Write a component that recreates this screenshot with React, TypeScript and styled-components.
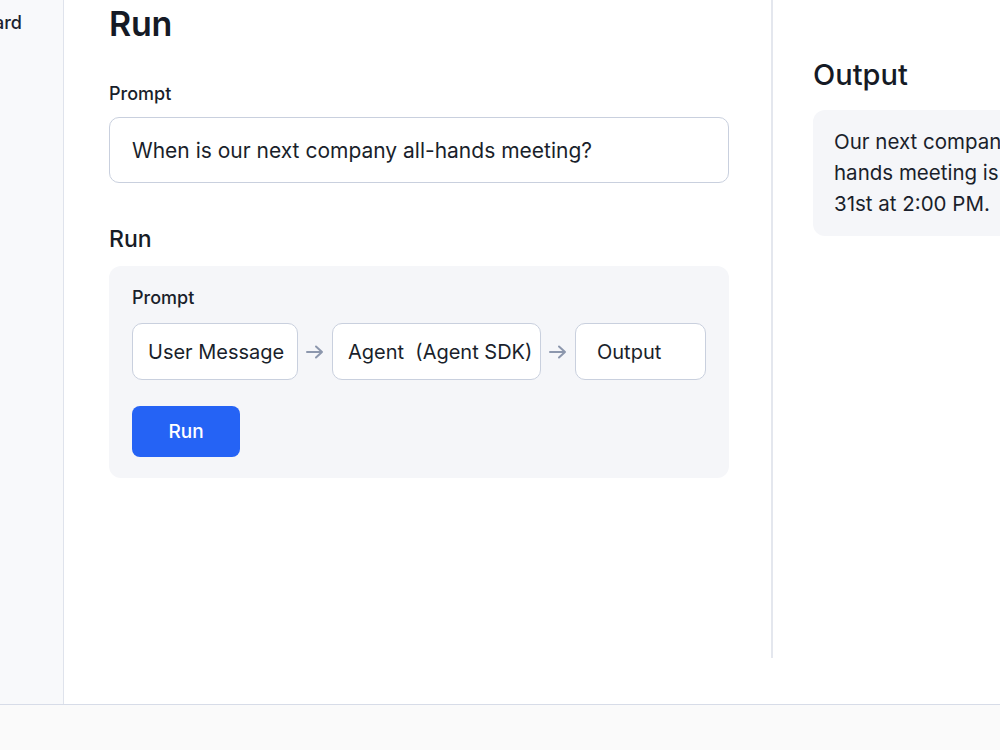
import styled, { createGlobalStyle } from "styled-components";

const GlobalStyle = createGlobalStyle`
  html, body {
    margin: 0;
    padding: 0;
    background: #ffffff;
    overflow: hidden;
  }
  body {
    font-family: Inter, "Noto Sans", "Liberation Sans", sans-serif;
    color: #171c26;
  }
  * {
    box-sizing: border-box;
  }
`;

const Shell = styled.div`
  width: 1000px;
  height: 750px;
  display: flex;
  flex-direction: column;
  overflow: hidden;
`;

const Body = styled.div`
  height: 705px;
  display: flex;
  border-bottom: 1px solid #d7dce8;
`;

const Sidebar = styled.aside`
  flex: 0 0 244px;
  margin-left: -180px;
  background: #f8f9fb;
  border-right: 1px solid #dfe3ec;
  padding: 12px 0 0 108px;
`;

const NavItem = styled.div`
  font-size: 18px;
  font-weight: 500;
  line-height: 22px;
  color: #1c2230;
`;

const Main = styled.main`
  flex: 1;
  display: flex;
  align-items: flex-start;
`;

const LeftColumn = styled.section`
  flex: 0 0 708px;
  height: 658px;
  padding: 0 42px 0 45px;
  border-right: 2px solid #e4e7ee;
`;

const RightColumn = styled.section`
  flex: 1;
  padding: 58px 0 0 40px;
  overflow: hidden;
`;

const PageTitle = styled.h1`
  margin: 0;
  padding-top: 2px;
  font-size: 34px;
  font-weight: 600;
  line-height: 44px;
  letter-spacing: -0.3px;
  color: #151a25;
`;

const Label = styled.div<{ $top?: number }>`
  margin-top: ${(p) => p.$top ?? 0}px;
  font-size: 18px;
  font-weight: 500;
  line-height: 22px;
  color: #1a1f2b;
`;

const PromptInput = styled.div`
  margin-top: 12px;
  height: 66px;
  display: flex;
  align-items: center;
  padding: 0 22px;
  border: 1px solid #c9d0de;
  border-radius: 10px;
  font-size: 21px;
  color: #1a1f2b;
`;

const SectionTitle = styled.h2`
  margin: 42px 0 0;
  font-size: 23px;
  font-weight: 500;
  line-height: 28px;
  color: #171c26;
`;

const Panel = styled.div`
  margin-top: 13px;
  background: #f5f6f9;
  border-radius: 12px;
  padding: 21px 23px 21px 23px;
`;

const Flow = styled.div`
  margin-top: 14px;
  display: flex;
  align-items: center;
`;

const Node = styled.div<{ $width: number; $pad: number }>`
  width: ${(p) => p.$width}px;
  height: 57px;
  display: flex;
  align-items: center;
  padding-left: ${(p) => p.$pad}px;
  background: #ffffff;
  border: 1px solid #c9d0de;
  border-radius: 10px;
  font-size: 20px;
  color: #1a1f2b;
  white-space: pre;
`;

const Arrow = styled.div`
  width: 34px;
  display: flex;
  justify-content: center;
  color: #8c97ad;
`;

const RunButton = styled.button`
  margin-top: 26px;
  width: 108px;
  height: 51px;
  border: none;
  border-radius: 8px;
  background: #2563f5;
  color: #ffffff;
  font-family: inherit;
  font-size: 19px;
  font-weight: 500;
`;

const OutputTitle = styled.h2`
  margin: 0;
  font-size: 29px;
  font-weight: 500;
  line-height: 34px;
  color: #151a25;
`;

const OutputBox = styled.div`
  margin-top: 18px;
  width: 300px;
  background: #f5f6f9;
  border-radius: 12px;
  padding: 16px 21px 17px;
  font-size: 20.5px;
  line-height: 31px;
  color: #1a1f2b;
`;

const Footer = styled.footer`
  flex: 1;
  background: #fafafa;
`;

function ArrowIcon() {
  return (
    <svg width="20" height="16" viewBox="0 0 20 16" fill="none">
      <path
        d="M2 8h15M11 2.5L17 8l-6 5.5"
        stroke="currentColor"
        strokeWidth="2"
        strokeLinecap="round"
        strokeLinejoin="round"
      />
    </svg>
  );
}

const nodes = [
  { label: "User Message", width: 166, pad: 15 },
  { label: "Agent  (Agent SDK)", width: 209, pad: 15 },
  { label: "Output", width: 131, pad: 21 },
];

function App() {
  return (
    <>
      <GlobalStyle />
      <Shell>
        <Body>
          <Sidebar>
            <NavItem>Dashboard</NavItem>
          </Sidebar>
          <Main>
            <LeftColumn>
              <PageTitle>Run</PageTitle>
              <Label $top={37}>Prompt</Label>
              <PromptInput>When is our next company all-hands meeting?</PromptInput>
              <SectionTitle>Run</SectionTitle>
              <Panel>
                <Label>Prompt</Label>
                <Flow>
                  {nodes.map((node, i) => (
                    <>
                      {i > 0 && (
                        <Arrow key={`a${i}`}>
                          <ArrowIcon />
                        </Arrow>
                      )}
                      <Node key={node.label} $width={node.width} $pad={node.pad}>
                        {node.label}
                      </Node>
                    </>
                  ))}
                </Flow>
                <RunButton>Run</RunButton>
              </Panel>
            </LeftColumn>
            <RightColumn>
              <OutputTitle>Output</OutputTitle>
              <OutputBox>
                Our next company all-hands meeting is on May 31st at 2:00 PM.
              </OutputBox>
            </RightColumn>
          </Main>
        </Body>
        <Footer />
      </Shell>
    </>
  );
}

export default App;
